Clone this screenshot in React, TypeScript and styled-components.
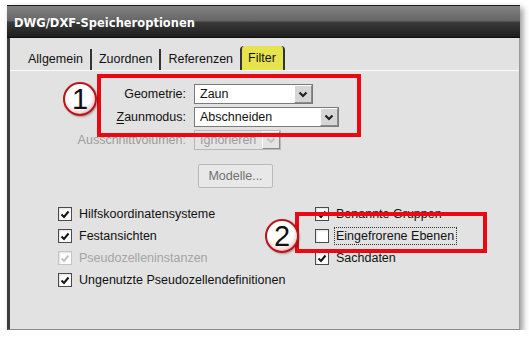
import React from 'react';
import styled, { createGlobalStyle, css } from 'styled-components';

const GlobalStyle = createGlobalStyle`
  html, body {
    margin: 0;
    background: #fff;
  }
  body {
    font-family: 'Liberation Sans', Arial, sans-serif;
    font-size: 12.5px;
    color: #111;
  }
`;

const Page = styled.div`
  padding: 5px 0 0 7px;
`;

const Window = styled.div`
  position: relative;
  width: 513px;
  height: 325px;
  display: flex;
  flex-direction: column;
  box-shadow: 3px 3px 6px rgba(0, 0, 0, 0.4);
`;

const TitleBar = styled.div`
  height: 33px;
  box-sizing: border-box;
  padding: 3px 0 0 7px;
  display: flex;
  align-items: center;
  border-top: 1px solid #1c1c1c;
  border-bottom: 1px solid #0e0e0e;
  background: linear-gradient(#828282 0%, #666 48%, #3a3a3a 52%, #1e1e1e 100%);
  color: #fff;
  font: bold 11.5px 'DejaVu Sans', Verdana, sans-serif;
`;

const Body = styled.div`
  flex: 1;
  display: flex;
  flex-direction: column;
  background: #e2e2e2;
  border-left: 3px solid #3c3c3c;
  border-right: 1px solid #9a9a9a;
  border-bottom: 1px solid #8a8a8a;
`;

const TabRow = styled.div`
  height: 33px;
  box-sizing: border-box;
  display: flex;
  align-items: flex-end;
  padding-left: 11px;
  border-bottom: 1px solid #fbfbfb;
`;

const Tab = styled.div<{ $active?: boolean }>`
  height: 21px;
  box-sizing: border-box;
  padding: 0 7px 1px;
  display: flex;
  align-items: center;
  border-right: 2px solid #333;
  ${(p) =>
    p.$active &&
    css`
      height: 24px;
      margin-left: -2px;
      padding: 0 7px 0 6px;
      background: #e6e34e;
      border-left: 2px solid #333;
      border-radius: 4px 4px 0 0;
    `}
`;

const Panel = styled.div`
  padding-top: 13px;
`;

const FormGrid = styled.div`
  display: grid;
  grid-template-columns: 176px auto;
  column-gap: 8px;
  row-gap: 3px;
  align-items: center;
`;

const Label = styled.span<{ $disabled?: boolean }>`
  text-align: right;
  color: ${(p) => (p.$disabled ? '#9c9c9c' : '#111')};

  u {
    text-decoration-thickness: 1px;
    text-underline-offset: 2px;
  }
`;

const Combo = styled.div<{ $width: number; $disabled?: boolean }>`
  width: ${(p) => p.$width}px;
  height: 20px;
  box-sizing: border-box;
  display: flex;
  align-items: center;
  justify-self: start;
  background: ${(p) => (p.$disabled ? '#e4e4e4' : '#fff')};
  border: 1px solid ${(p) => (p.$disabled ? '#b8b8b8' : '#7a7a7a')};
  color: ${(p) => (p.$disabled ? '#9c9c9c' : '#111')};
`;

const ComboText = styled.span`
  flex: 1;
  padding-left: 5px;
`;

const ComboButton = styled.div<{ $disabled?: boolean }>`
  width: 18px;
  height: 18px;
  box-sizing: border-box;
  display: flex;
  align-items: center;
  justify-content: center;
  background: ${(p) => (p.$disabled ? '#e4e4e4' : '#d6d6d6')};
  border: 1px solid #fdfdfd;
  border-right-color: #8a8a8a;
  border-bottom-color: #8a8a8a;
`;

const PushButton = styled.div`
  grid-column: 2;
  justify-self: start;
  margin: 11px 0 0 4px;
  width: 75px;
  height: 24px;
  box-sizing: border-box;
  display: flex;
  align-items: center;
  justify-content: center;
  background: #e8e8e8;
  border: 1px solid #b9b9b9;
  border-radius: 2px;
  color: #707070;
`;

const CheckGrid = styled.div`
  margin-top: 15px;
  padding-left: 48px;
  display: grid;
  grid-template-columns: 257px auto;
`;

const CheckColumn = styled.div`
  display: flex;
  flex-direction: column;
`;

const CheckRow = styled.div<{ $disabled?: boolean }>`
  height: 22px;
  display: flex;
  align-items: center;
  gap: 7px;
  color: ${(p) => (p.$disabled ? '#a4a4a4' : '#111')};
`;

const Box = styled.div<{ $disabled?: boolean }>`
  width: 14px;
  height: 14px;
  box-sizing: border-box;
  display: flex;
  align-items: center;
  justify-content: center;
  background: #fff;
  border: 1px solid ${(p) => (p.$disabled ? '#c4c4c4' : '#4a4a4a')};
  box-shadow: inset 1px 1px 2px rgba(0, 0, 0, 0.12);
`;

const FocusText = styled.span`
  outline: 1px dotted #333;
  outline-offset: 1px;
  padding-right: 1px;
`;

const Marker = styled.div<{ $x: number; $y: number; $w: number; $h: number }>`
  position: absolute;
  left: ${(p) => p.$x}px;
  top: ${(p) => p.$y}px;
  width: ${(p) => p.$w}px;
  height: ${(p) => p.$h}px;
  box-sizing: border-box;
  border: 4px solid #ec0812;
  pointer-events: none;
`;

const Badge = styled.div<{ $x: number; $y: number }>`
  position: absolute;
  left: ${(p) => p.$x}px;
  top: ${(p) => p.$y}px;
  width: 34px;
  height: 34px;
  box-sizing: border-box;
  border-radius: 50%;
  display: flex;
  align-items: center;
  justify-content: center;
  border: 2px solid #b8141a;
  background: radial-gradient(circle at 45% 40%, #fff 0%, #fff 50%, #f6d6d6 68%, #dd4a4a 88%, #c01a20 100%);
  box-shadow: 1px 1px 2px rgba(0, 0, 0, 0.3);
  font: 29px 'Liberation Sans', Arial, sans-serif;
  line-height: 1;
  color: #111;
`;

const Chevron = ({ disabled }: { disabled?: boolean }) => (
  <svg width="10" height="7" viewBox="0 0 10 7">
    <polyline
      points="1.5,1.5 5,5 8.5,1.5"
      fill="none"
      stroke={disabled ? '#c4c4c4' : '#222'}
      strokeWidth="2.2"
    />
  </svg>
);

const Tick = ({ disabled }: { disabled?: boolean }) => (
  <svg width="10" height="9" viewBox="0 0 10 9">
    <polyline
      points="1.5,4.5 4,7 8.5,1.5"
      fill="none"
      stroke={disabled ? '#c4c4c4' : '#151515'}
      strokeWidth="2"
    />
  </svg>
);

type CheckProps = { label: string; checked?: boolean; disabled?: boolean; focused?: boolean };

const Check = ({ label, checked, disabled, focused }: CheckProps) => (
  <CheckRow $disabled={disabled}>
    <Box $disabled={disabled}>{checked && <Tick disabled={disabled} />}</Box>
    {focused ? <FocusText>{label}</FocusText> : <span>{label}</span>}
  </CheckRow>
);

const App = () => {
  return (
    <Page>
      <GlobalStyle />
      <Window>
        <TitleBar>DWG/DXF-Speicheroptionen</TitleBar>
        <Body>
          <TabRow>
            <Tab>Allgemein</Tab>
            <Tab>Zuordnen</Tab>
            <Tab>Referenzen</Tab>
            <Tab $active>Filter</Tab>
          </TabRow>
          <Panel>
            <FormGrid>
              <Label>Geometrie:</Label>
              <Combo $width={119}>
                <ComboText>Zaun</ComboText>
                <ComboButton>
                  <Chevron />
                </ComboButton>
              </Combo>
              <Label>
                <u>Z</u>aunmodus:
              </Label>
              <Combo $width={145}>
                <ComboText>Abschneiden</ComboText>
                <ComboButton>
                  <Chevron />
                </ComboButton>
              </Combo>
              <Label $disabled>Ausschnittvolumen:</Label>
              <Combo $width={87} $disabled>
                <ComboText>Ignorieren</ComboText>
                <ComboButton $disabled>
                  <Chevron disabled />
                </ComboButton>
              </Combo>
              <PushButton>Modelle...</PushButton>
            </FormGrid>
            <CheckGrid>
              <CheckColumn>
                <Check label="Hilfskoordinatensysteme" checked />
                <Check label="Festansichten" checked />
                <Check label="Pseudozelleninstanzen" checked disabled />
                <Check label="Ungenutzte Pseudozellendefinitionen" checked />
              </CheckColumn>
              <CheckColumn>
                <Check label="Benannte Gruppen" checked />
                <Check label="Eingefrorene Ebenen" focused />
                <Check label="Sachdaten" checked />
              </CheckColumn>
            </CheckGrid>
          </Panel>
        </Body>
        <Marker $x={90} $y={69} $w={264} $h={63} />
        <Marker $x={288} $y={207} $w={192} $h={41} />
        <Badge $x={56} $y={77}>1</Badge>
        <Badge $x={258} $y={214}>2</Badge>
      </Window>
    </Page>
  );
};

export default App;
